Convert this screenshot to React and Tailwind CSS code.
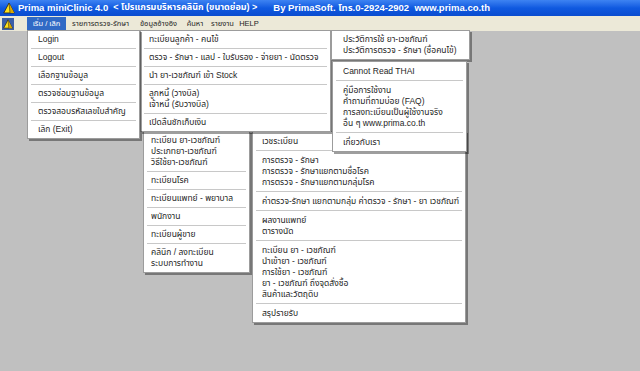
import React from 'react';

const FONT = "font-['Liberation_Sans','Noto_Sans_Thai','Loma','Garuda','DejaVu_Sans',sans-serif]";

function Logo({ className }) {
  return (
    <svg viewBox="0 0 12 12" className={className}>
      <polygon points="6,1 11.3,11 0.7,11" fill="#ffe21a" stroke="#2a2a2a" strokeWidth="0.9" />
      <polygon points="6,1 11.3,11 7,11" fill="#d9a800" />
      <line x1="6" y1="1" x2="7" y2="11" stroke="#2a2a2a" strokeWidth="0.6" />
    </svg>
  );
}

function Menu({ pos, pad, groups }) {
  return (
    <div className={'absolute bg-white border border-[#9c9c9c] shadow-[2px_2px_0_rgba(0,0,0,0.38)] text-[8.5px] text-[#1e1e1e] ' + pos}>
      {groups.map((g, i) => (
        <div key={i}>
          {i > 0 && <div className="mx-[3px] h-px bg-[#c8c8c8]" />}
          <div className={pad}>
            {g.map((line, j) => (
              <div key={j} className="leading-[11px] whitespace-nowrap">{line}</div>
            ))}
          </div>
        </div>
      ))}
    </div>
  );
}

const topItems = [
  { label: 'เริ่ม / เลิก', w: 'w-[39px]', active: true },
  { label: 'รายการตรวจ-รักษา', w: 'w-[69px]' },
  { label: 'ข้อมูลอ้างอิง', w: 'w-[47px]' },
  { label: 'ค้นหา', w: 'w-[26px]' },
  { label: 'รายงาน', w: 'w-[29px]' },
  { label: 'HELP', w: 'w-[24px]' },
];

export default function App() {
  return (
    <div className={'relative w-[640px] h-[371px] overflow-hidden bg-[#c0c0c0] ' + FONT}>
      {/* title bar */}
      <div className="h-[16px] flex items-center bg-linear-to-b from-[#3d83f2] via-[#0f59e0] to-[#0a4ccf] text-white font-bold text-[10px] whitespace-nowrap">
        <Logo className="w-[12px] h-[12px] ml-[3px] mr-[3px]" />
        <span className="text-[9.5px]">Prima miniClinic 4.0</span>
        <span className="ml-[5px] text-[9px]">{'< โปรแกรมบริหารคลินิก (ขนาดย่อม) >'}</span>
        <span className="ml-[16px] text-[9.5px]">By PrimaSoft. โทร.0-2924-2902&nbsp;&nbsp;www.prima.co.th</span>
      </div>

      {/* menu bar */}
      <div className="h-[15px] flex items-center bg-[#ece9d8] text-[7.5px] text-[#1e1e1e] whitespace-nowrap">
        <div className="w-[27px] h-full flex items-center">
          <div className="ml-[2px] w-[12px] h-[12px] bg-[#3b5fa8] flex items-center justify-center">
            <Logo className="w-[10px] h-[10px]" />
          </div>
        </div>
        {topItems.map(it => (
          <div
            key={it.label}
            className={'h-[13px] flex items-center justify-center ' + it.w + (it.active ? ' bg-[#316ac5] text-white' : '')}
          >
            {it.label}
          </div>
        ))}
      </div>

      {/* dropdown menus */}
      <Menu
        pos="left-[140px] top-[30px] w-[191px] z-10"
        pad="py-[3px] pl-[8px]"
        groups={[
          ['ทะเบียนลูกค้า - คนไข้'],
          ['ตรวจ - รักษา - แลป - ใบรับรอง - จ่ายยา - นัดตรวจ'],
          ['นำ ยา-เวชภัณฑ์ เข้า Stock'],
          ['ลูกหนี้ (วางบิล)', 'เจ้าหนี้ (รับวางบิล)'],
          ['เปิดลิ้นชักเก็บเงิน'],
        ]}
      />
      <Menu
        pos="left-[143px] top-[131px] w-[107px] z-0"
        pad="py-[3px] pl-[7px]"
        groups={[
          ['ทะเบียน ยา-เวชภัณฑ์', 'ประเภทยา-เวชภัณฑ์', 'วิธีใช้ยา-เวชภัณฑ์'],
          ['ทะเบียนโรค'],
          ['ทะเบียนแพทย์ - พยาบาล'],
          ['พนักงาน'],
          ['ทะเบียนผู้ขาย'],
          ['คลินิก / ลงทะเบียน', 'ระบบการทำงาน'],
        ]}
      />
      <Menu
        pos="left-[252px] top-[131px] w-[214px] z-0"
        pad="py-[3.5px] pl-[9px]"
        groups={[
          ['เวชระเบียน'],
          ['การตรวจ - รักษา', 'การตรวจ - รักษาแยกตามชื่อโรค', 'การตรวจ - รักษาแยกตามกลุ่มโรค'],
          ['ค่าตรวจ-รักษา แยกตามกลุ่ม ค่าตรวจ - รักษา - ยา เวชภัณฑ์'],
          ['ผลงานแพทย์', 'ตารางนัด'],
          ['ทะเบียน ยา - เวชภัณฑ์', 'นำเข้ายา - เวชภัณฑ์', 'การใช้ยา -  เวชภัณฑ์', 'ยา - เวชภัณฑ์ ถึงจุดสั่งซื้อ', 'สินค้าและวัตถุดิบ'],
          ['สรุปรายรับ'],
        ]}
      />
      <Menu
        pos="left-[331px] top-[30px] w-[139px] z-10"
        pad="py-[3px] pl-[11px]"
        groups={[['ประวัติการใช้ ยา-เวชภัณฑ์', 'ประวัติการตรวจ - รักษา (ชื่อคนไข้)']]}
      />
      <Menu
        pos="left-[332px] top-[61px] w-[135px] z-20"
        pad="py-[3.5px] pl-[10px]"
        groups={[
          ['Cannot Read THAI'],
          ['คู่มือการใช้งาน', 'คำถามที่ถามบ่อย (FAQ)', 'การลงทะเบียนเป็นผู้ใช้งานจริง', 'อื่น ๆ www.prima.co.th'],
          ['เกี่ยวกับเรา'],
        ]}
      />
      <Menu
        pos="left-[27px] top-[30px] w-[113px] z-30"
        pad="py-[3px] pl-[10px]"
        groups={[
          ['Login'],
          ['Logout'],
          ['เลือกฐานข้อมูล'],
          ['ตรวจซ่อมฐานข้อมูล'],
          ['ตรวจสอบรหัสเลขใบสำคัญ'],
          ['เลิก (Exit)'],
        ]}
      />
    </div>
  );
}
